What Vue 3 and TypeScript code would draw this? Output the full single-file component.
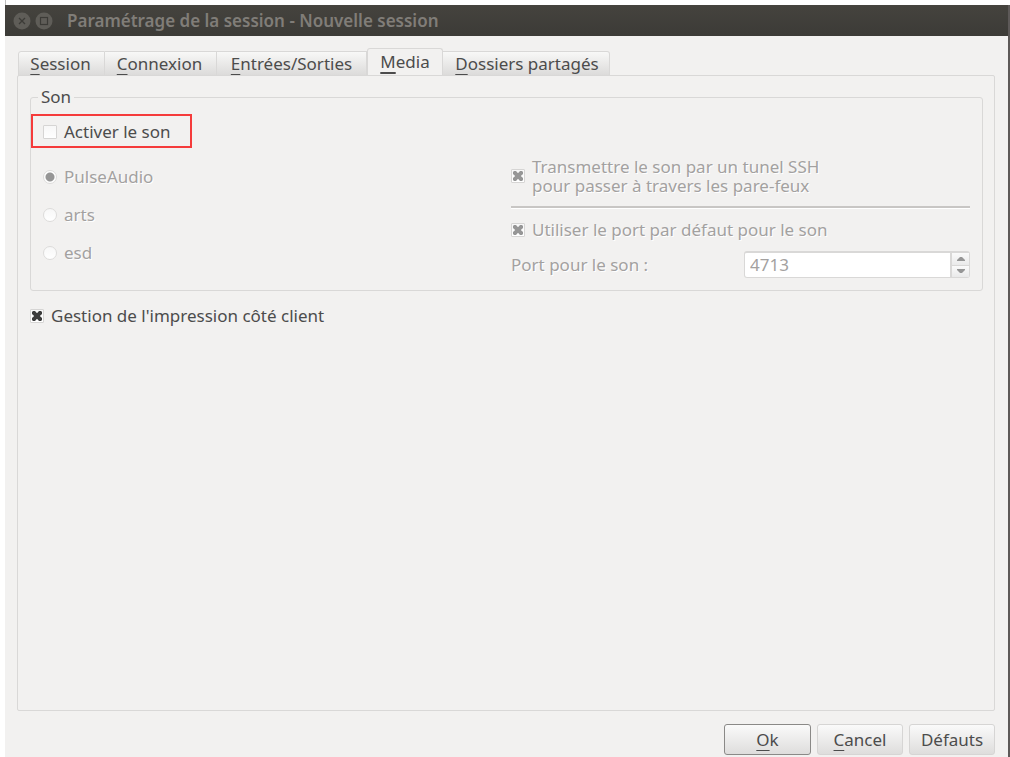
<script setup lang="ts">
import { ref } from 'vue'

interface Tab {
  id: string
  key: string
  rest: string
}

const tabs: Tab[] = [
  { id: 'session', key: 'S', rest: 'ession' },
  { id: 'connexion', key: 'C', rest: 'onnexion' },
  { id: 'io', key: 'E', rest: 'ntrées/Sorties' },
  { id: 'media', key: 'M', rest: 'edia' },
  { id: 'shared', key: 'D', rest: 'ossiers partagés' },
]

const activeTab = ref('media')
const soundEnabled = ref(false)
const soundSystem = ref('PulseAudio')
const systems = ['PulseAudio', 'arts', 'esd']
const sshTunnel = ref(true)
const defaultPort = ref(true)
const port = ref('4713')
const clientPrinting = ref(true)
</script>

<template>
  <div class="desktop">
    <main class="window">
      <header class="titlebar">
        <button class="wm" type="button" aria-label="Fermer">
          <svg viewBox="0 0 18 18" width="18" height="18">
            <circle cx="9" cy="9" r="8.5" fill="#5f5d58" />
            <path d="M6 6l6 6M12 6l-6 6" stroke="#3c3b37" stroke-width="1.3" fill="none" />
          </svg>
        </button>
        <button class="wm" type="button" aria-label="Agrandir">
          <svg viewBox="0 0 18 18" width="18" height="18">
            <circle cx="9" cy="9" r="8.5" fill="#5f5d58" />
            <rect x="5.5" y="5.5" width="7" height="7" stroke="#3c3b37" stroke-width="1.2" fill="none" />
          </svg>
        </button>
        <h1>Paramétrage de la session - Nouvelle session</h1>
      </header>

      <div class="body">
        <nav class="tabs" role="tablist">
          <button
            v-for="tab in tabs"
            :key="tab.id"
            type="button"
            role="tab"
            class="tab"
            :class="[tab.id, { active: tab.id === activeTab }]"
            :aria-selected="tab.id === activeTab"
            @click="activeTab = tab.id"
          ><span class="key">{{ tab.key }}</span>{{ tab.rest }}</button>
        </nav>

        <section class="panel" role="tabpanel">
          <fieldset class="group">
            <legend>Son</legend>
            <label class="check highlight">
              <input v-model="soundEnabled" type="checkbox" />
              <span>Activer le son</span>
            </label>

            <div class="columns">
              <div class="radios">
                <label v-for="name in systems" :key="name" class="check disabled">
                  <input v-model="soundSystem" type="radio" name="system" :value="name" :disabled="!soundEnabled" />
                  <span>{{ name }}</span>
                </label>
              </div>

              <div class="network">
                <label class="check disabled tunnel">
                  <input v-model="sshTunnel" type="checkbox" :disabled="!soundEnabled" />
                  <span>Transmettre le son par un tunel SSH<br />pour passer à travers les pare-feux</span>
                </label>
                <hr />
                <label class="check disabled">
                  <input v-model="defaultPort" type="checkbox" :disabled="!soundEnabled" />
                  <span>Utiliser le port par défaut pour le son</span>
                </label>
                <div class="port disabled">
                  <label for="port">Port pour le son :</label>
                  <div class="spin">
                    <input id="port" v-model="port" type="text" :disabled="!soundEnabled" />
                    <div class="steps">
                      <button type="button" disabled aria-label="Augmenter">
                        <svg viewBox="0 0 8 5" width="8" height="5"><path d="M0 5V4L3 1H5L8 4V5Z" fill="#969696" /></svg>
                      </button>
                      <button type="button" disabled aria-label="Diminuer">
                        <svg viewBox="0 0 8 5" width="8" height="5"><path d="M0 0V1L3 4H5L8 1V0Z" fill="#969696" /></svg>
                      </button>
                    </div>
                  </div>
                </div>
              </div>
            </div>
          </fieldset>

          <label class="check printing">
            <input v-model="clientPrinting" type="checkbox" />
            <span>Gestion de l'impression côté client</span>
          </label>
        </section>

        <footer class="actions">
          <button type="button" class="action default"><span class="key">O</span>k</button>
          <button type="button" class="action"><span class="key">C</span>ancel</button>
          <button type="button" class="action">Défauts</button>
        </footer>
      </div>
    </main>
  </div>
</template>

<style>
body {
  margin: 0;
  background: #fff;
}
</style>

<style scoped>
* {
  box-sizing: border-box;
}

.desktop {
  min-height: 100vh;
  display: flex;
  padding: 5px 0 0 5px;
  background: linear-gradient(#bdbdbd, #bdbdbd) 5px 0 / 1px 5px no-repeat;
  font: 17px/20px "Noto Sans", "Open Sans", sans-serif;
  color: #4c4c4c;
}

.window {
  flex: 1;
  display: flex;
  flex-direction: column;
  background: #f2f1f0;
  border-right: 2px solid #5d5958;
}

.titlebar {
  height: 31px;
  display: flex;
  align-items: center;
  gap: 4px;
  padding: 0 8px;
  background: linear-gradient(#45433e, #3c3b37);
}

.titlebar h1 {
  margin: 0 0 0 10px;
  font-size: 17px;
  line-height: 20px;
  font-weight: 600;
  color: #807d78;
}

button,
input {
  font: inherit;
  color: inherit;
  margin: 0;
}

.wm {
  display: flex;
  padding: 0;
  border: 0;
  background: none;
}

.body {
  flex: 1;
  display: flex;
  flex-direction: column;
  padding: 12px 13px 2px 12px;
}

.tabs {
  display: flex;
  align-items: flex-end;
  padding-left: 1px;
  margin-bottom: -1px;
}

.tab {
  height: 25px;
  padding: 0;
  border: 1px solid #d9d8d7;
  border-left-width: 0;
  background: linear-gradient(#f8f8f7, #dcdbda);
  white-space: nowrap;
}

.tab.session {
  width: 87px;
  padding-right: 2px;
  border-left-width: 1px;
  border-top-left-radius: 3px;
}

.tab.connexion {
  width: 112px;
  padding-right: 2px;
}

.tab.io {
  width: 150px;
}

.tab.media {
  width: 76px;
  border-left-width: 1px;
}

.tab.shared {
  width: 167px;
  padding-left: 2px;
  border-top-right-radius: 3px;
}

.tab.active {
  height: 28px;
  border-bottom-color: #f2f1f0;
  border-radius: 3px 3px 0 0;
  background: #f2f1f0;
}

.key {
  text-decoration: underline;
  text-decoration-thickness: 1px;
  text-underline-offset: 4px;
}

.active .key {
  text-decoration-thickness: 2px;
}

.panel {
  flex: 1;
  padding: 11px 11px 0 12px;
  border: 1px solid #d9d8d7;
  border-radius: 2px;
}

.group {
  margin: 0;
  min-width: 0;
  padding: 7px 12px 12px;
  border: 1px solid #d9d8d7;
  border-radius: 3px;
}

.group legend {
  padding: 0 3px;
  margin-left: -5px;
}

.check {
  display: flex;
  align-items: center;
  gap: 7px;
}

.check input {
  appearance: none;
  flex: none;
  width: 14px;
  height: 14px;
  border: 1px solid #d6d5d4;
  border-radius: 1px;
  background: linear-gradient(#f7f7f7, #fff);
}

.check input[type="radio"] {
  border-color: #dddcdb;
  border-radius: 50%;
}

.check input[type="radio"]:checked {
  background: radial-gradient(circle, #969696 0 4px, #fff 5px);
}

.check input[type="checkbox"]:checked {
  display: grid;
  place-items: center;
}

.check input[type="checkbox"]:checked::before {
  content: "";
  width: 10px;
  height: 10px;
  background: #3c3c3c;
  clip-path: polygon(0 10%, 10% 0, 30% 0, 50% 22%, 70% 0, 90% 0, 100% 10%, 100% 30%, 78% 50%, 100% 70%, 100% 90%, 90% 100%, 70% 100%, 50% 78%, 30% 100%, 10% 100%, 0 90%, 0 70%, 22% 50%, 0 30%);
}

.check.disabled input[type="checkbox"]:checked::before {
  background: #969696;
}

.highlight {
  width: 161px;
  height: 34px;
  margin-left: -12px;
  padding: 1px 0 0 10px;
  border: 2px solid #f53b3b;
}

.disabled {
  color: #a3a1a0;
  text-shadow: 1px 1px 0 #fff;
}

.columns {
  display: grid;
  grid-template-columns: 1fr 1fr;
  column-gap: 9px;
  padding-top: 9px;
}

.radios .check {
  height: 38px;
}

.radios {
  padding-top: 1px;
}

.tunnel {
  line-height: 19px;
}

hr {
  height: 3px;
  margin: 11px 0;
  border: 0;
  border-top: 2px solid #c8c6c4;
  background: #fff;
}

.port {
  display: flex;
  align-items: center;
  justify-content: space-between;
  margin-top: 11px;
}

.spin {
  display: flex;
  width: 226px;
  height: 27px;
  border: 1px solid #d9d8d7;
  border-top-width: 2px;
  border-radius: 3px;
  background: #fff;
}

.spin input {
  flex: 1;
  min-width: 0;
  padding: 0 5px;
  border: 0;
  background: none;
}

.steps {
  width: 19px;
  display: flex;
  flex-direction: column;
  border-left: 2px solid #d9d8d7;
}

.steps button {
  flex: 1;
  display: flex;
  align-items: center;
  justify-content: center;
  padding: 0;
  border: 0;
  background: linear-gradient(#fafafa, #eaeaea);
}

.steps button + button {
  border-top: 1px solid #d9d8d7;
}

.printing {
  margin-top: 15px;
}

.actions {
  display: flex;
  justify-content: flex-end;
  gap: 6px;
  padding-top: 13px;
}

.action {
  width: 86px;
  height: 31px;
  padding: 0;
  border: 1px solid #d6d5d4;
  border-radius: 3px;
  background: linear-gradient(#fafafa, #dedddc);
}

.action.default {
  width: 87px;
  border-color: #8a8987;
}
</style>
